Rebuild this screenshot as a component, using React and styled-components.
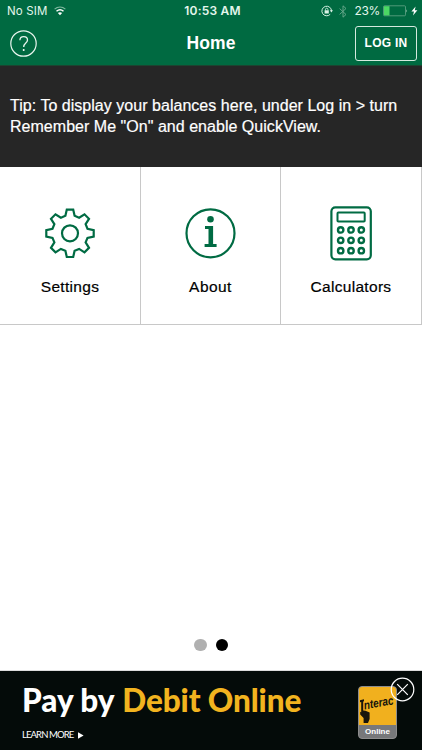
import React from 'react'
import styled, { createGlobalStyle } from 'styled-components'

const GlobalStyle = createGlobalStyle`
    * {
        box-sizing: border-box;
    }

    body {
        margin: 0;
        background: #fff;
        font-family: 'Liberation Sans', Arial, sans-serif;
    }

    svg {
        display: block;
        flex-shrink: 0;
    }
`

const Screen = styled.div`
    display: flex;
    flex-direction: column;
    width: 422px;
    height: 750px;
    overflow: hidden;
    background: #fff;
`

const TopBar = styled.header`
    height: 66px;
    background: #006a41;
    border-bottom: 1px solid #1c4430;
    color: #fff;
`

const StatusBar = styled.div`
    display: grid;
    grid-template-columns: 1fr auto 1fr;
    align-items: center;
    height: 22px;
    padding: 0 4px 0 7px;
    font-family: Inter, 'Liberation Sans', sans-serif;
    font-size: 12px;
    line-height: 22px;
`

const StatusGroup = styled.div`
    display: flex;
    align-items: center;
    justify-content: ${props => props.$end ? 'flex-end' : 'flex-start'};
    white-space: nowrap;
`

const Carrier = styled.span`
    margin-right: 6px;
    font-size: 11.5px;
    letter-spacing: 0.15px;
    color: #e4f6ec;
`

const Clock = styled.span`
    font-size: 12px;
    font-weight: 600;
    letter-spacing: 0.2px;
    color: #e4f6ec;
`

const Percent = styled.span`
    margin: 0 3px 0 7px;
    letter-spacing: -0.3px;
    color: #e4f6ec;
`

const NavBar = styled.div`
    display: grid;
    grid-template-columns: 1fr auto 1fr;
    align-items: center;
    height: 42px;
    padding: 0 5px 0 10px;
`

const HelpButton = styled.button`
    width: 27px;
    height: 27px;
    padding: 0;
    border: 0;
    background: none;
`

const Title = styled.h1`
    margin: 1px 0 0 -5px;
    font-size: 17.5px;
    font-weight: 700;
    letter-spacing: 0.1px;
    line-height: 41px;
`

const LoginButton = styled.button`
    justify-self: end;
    width: 62px;
    height: 35px;
    padding: 0;
    border: 1px solid #d5eadf;
    border-radius: 3px;
    background: none;
    color: #fff;
    font-family: inherit;
    font-size: 12px;
    font-weight: 700;
    letter-spacing: 0.25px;
`

const Tip = styled.p`
    height: 101px;
    margin: 0;
    padding: 30px 0 0 10px;
    background: #262626;
    color: #fff;
    font-size: 16px;
    line-height: 20.5px;
    letter-spacing: 0.03px;
    -webkit-text-stroke: 0.2px #fff;
    white-space: nowrap;
`

const Tiles = styled.div`
    display: grid;
    grid-template-columns: 141px 140px 141px;
    height: 158px;
    border-bottom: 1px solid #c8c8c8;
`

const Tile = styled.div`
    display: flex;
    flex-direction: column;
    align-items: center;
    padding-top: 36px;
    border-right: 1px solid #c8c8c8;
    color: #000;
`

const TileLabel = styled.span`
    margin-top: 14px;
    font-size: 15.5px;
    line-height: 20px;
    letter-spacing: ${props => props.$spacing || 0}px;
    -webkit-text-stroke: 0.2px #000;
`

const Pager = styled.div`
    display: flex;
    flex: 1;
    align-items: flex-end;
    justify-content: center;
    gap: 9px;
    padding-bottom: 19px;
    border-bottom: 1px solid #dcdcdc;
`

const Dot = styled.span`
    width: 12.5px;
    height: 12.5px;
    border-radius: 50%;
    background: ${props => props.$active ? '#000' : '#b0b0b0'};
`

const Banner = styled.footer`
    display: flex;
    justify-content: space-between;
    height: 79px;
    padding-left: 22px;
    background: #040b09;
    color: #fff;
`

const BannerText = styled.div`
    padding-top: 11px;
    font-family: Lato, 'Liberation Sans', sans-serif;
    white-space: nowrap;
`

const Slogan = styled.div`
    font-size: 31.5px;
    font-weight: 900;
    line-height: 36px;
`

const Highlight = styled.span`
    margin-left: 1px;
    letter-spacing: -0.12px;
    color: #f2b41f;
`

const LearnMore = styled.div`
    display: flex;
    align-items: center;
    gap: 5px;
    margin-top: 10px;
    font-size: 9.5px;
    line-height: 14px;
    letter-spacing: -0.9px;
`

const BannerSide = styled.div`
    position: relative;
    width: 64px;
    padding-top: 15px;
`

const InteracBadge = styled.div`
    display: flex;
    flex-direction: column;
    width: 39px;
    height: 53px;
    border: 1px solid #8d8d8d;
    border-radius: 4px;
    background: #77787a;
`

const BadgeArt = styled.div`
    height: 38px;
    border-radius: 3px 3px 0 0;
    background: #f1b01e;
`

const BadgeLabel = styled.span`
    font-size: 8px;
    font-weight: 700;
    line-height: 13px;
    text-align: center;
`

const CloseButton = styled.button`
    position: absolute;
    top: 6px;
    right: 7px;
    width: 25px;
    height: 25px;
    padding: 0;
    border: 0;
    background: none;
`

const GREEN = '#006b43'

// half width and radius of each corner of a tooth, going clockwise
const TOOTH = [[-4.6, 17.5], [-3.2, 23.7], [3.2, 23.7], [4.6, 17.5]]

function gearPoints() {
    const points = []
    for (let i = 0; i < 8; i++) {
        const a = i * Math.PI / 4
        TOOTH.forEach(([x, r]) => {
            const px = x * Math.cos(a) + r * Math.sin(a)
            const py = x * Math.sin(a) - r * Math.cos(a)
            points.push(`${px.toFixed(2)},${py.toFixed(2)}`)
        })
    }
    return points.join(' ')
}

function GearIcon() {
    return (
        <svg width="60" height="60" viewBox="-30 -30.3 60 60" fill="none" stroke={GREEN} strokeWidth="2.2">
            <polygon points={gearPoints()} />
            <circle r="8" />
        </svg>
    )
}

function InfoIcon() {
    return (
        <svg width="60" height="60" viewBox="-29.5 -30.3 60 60" fill={GREEN}>
            <circle r="24" fill="none" stroke={GREEN} strokeWidth="2.2" />
            <circle cy="-14" r="3.3" />
            <path d="M-5.5-7.3H2.6V10.6H6.1V13.6H-5.9V10.6H-2V-4.3H-5.5Z" />
        </svg>
    )
}

function CalculatorIcon() {
    return (
        <svg width="60" height="60" viewBox="-30 -30.3 60 60" fill="none" stroke={GREEN} strokeWidth="2.2">
            <rect x="-19.6" y="-26" width="39.4" height="52" rx="4" />
            <rect x="-13.5" y="-20.7" width="27.2" height="9" rx="0.8" strokeWidth="2" />
            {[-3.4, 7, 17.4].map(y => [-10.3, 0, 10.3].map(x => (
                <circle key={`${x}${y}`} cx={x} cy={y} r="2.7" strokeWidth="2.4" />
            )))}
        </svg>
    )
}

function WifiIcon() {
    return (
        <svg width="12" height="10" viewBox="0 0 12 10" fill="none" stroke="#fff" strokeWidth="1.5">
            <path d="M.6 3.1C3.8.4 8.2.4 11.4 3.1" stroke="#7fb9a0" strokeWidth="1.2" />
            <path d="M2.5 5.2C4.5 3.5 7.5 3.5 9.5 5.2" />
            <path d="M3.9 7C5 6 7 6 8.1 7L6 9.2Z" fill="#fff" stroke="none" />
        </svg>
    )
}

function LockIcon() {
    return (
        <svg width="12" height="12" viewBox="0 0 12 12" fill="none" stroke="#d9f2e5">
            <path d="M9.2 9.3A4.8 4.8 0 1 1 10.5 6" />
            <path d="M8.8 5.3H12L10.4 7.4Z" fill="#d9f2e5" stroke="none" />
            <rect x="3.6" y="5.3" width="4.2" height="3.2" fill="#d9f2e5" stroke="none" />
            <path d="M4.5 5.5V4.4A1.2 1.2 0 0 1 6.9 4.4V5.5" strokeWidth=".8" />
        </svg>
    )
}

const StyledBluetooth = styled.svg`
    margin-left: 6px;
`

function BluetoothIcon() {
    return (
        <StyledBluetooth width="8" height="13" viewBox="0 0 8 13" fill="none" stroke="#6caa8e" strokeWidth="0.9">
            <path d="M.6 3.6L7 9.5 4 12.2V.8L7 3.5.6 9.4" />
        </StyledBluetooth>
    )
}

function BatteryIcon() {
    return (
        <svg width="25" height="12" viewBox="0 0 25 12">
            <rect x=".5" y=".8" width="22" height="10" rx="1" fill="none" stroke="#65a689" strokeWidth=".8" />
            <rect x="1" y="1.2" width="5.5" height="9.2" fill="#4cd864" />
            <path d="M23.3 4.2Q25 5.8 23.3 7.6Z" fill="#9ac7b1" />
        </svg>
    )
}

const StyledBolt = styled.svg`
    margin-left: 3px;
`

function BoltIcon() {
    return (
        <StyledBolt width="7" height="10" viewBox="0 0 7 10" fill="#fff">
            <path d="M4.6.5L.4 5.5H3L2 9.4L6.4 4.2H3.8Z" />
        </StyledBolt>
    )
}

function HelpIcon() {
    return (
        <svg width="27" height="27" viewBox="0 0 27 27" fill="none" stroke="#e8f5ee" strokeWidth="1.2">
            <circle cx="13.5" cy="13.5" r="12.7" />
            <path d="M9.9 10.3C9.9 5.4 17.5 5.6 17.5 10.1C17.5 13.2 13.7 12.8 13.7 16.9" strokeWidth="1.3" />
            <circle cx="13.7" cy="19.9" r="1" fill="#fff" stroke="none" />
        </svg>
    )
}

function CloseIcon() {
    return (
        <svg width="25" height="25" viewBox="0 0 25 25" fill="none" stroke="#fff" strokeWidth="1.2">
            <circle cx="12.5" cy="12.5" r="11.3" />
            <path d="M7.2 7.2L17.8 17.8M17.8 7.2L7.2 17.8" />
        </svg>
    )
}

const StyledArt = styled.svg`
    overflow: visible;
`

function InteracArt() {
    return (
        <StyledArt width="37" height="38" viewBox="0 0 37 38" fill="#17150c">
            <path d="M1 13.2L5 12.2V14.3L4.2 14.5V23.4L6.5 23.8L10.6 25.5V32L9 36H4.6V31L1.2 27.4V24.8L2.2 25.2V15L1 15.3Z" />
            <text x="5.5" y="22.4" transform="rotate(-10 5.5 22.4)" fontFamily="Liberation Sans, sans-serif" fontSize="12" fontWeight="700" fontStyle="italic" textLength="30" lengthAdjust="spacingAndGlyphs">nterac</text>
        </StyledArt>
    )
}

function App() {
    return (
        <Screen>
            <GlobalStyle />
            <TopBar>
                <StatusBar>
                    <StatusGroup>
                        <Carrier>No SIM</Carrier>
                        <WifiIcon />
                    </StatusGroup>
                    <Clock>10:53 AM</Clock>
                    <StatusGroup $end>
                        <LockIcon />
                        <BluetoothIcon />
                        <Percent>23%</Percent>
                        <BatteryIcon />
                        <BoltIcon />
                    </StatusGroup>
                </StatusBar>
                <NavBar>
                    <HelpButton aria-label="Help"><HelpIcon /></HelpButton>
                    <Title>Home</Title>
                    <LoginButton>LOG IN</LoginButton>
                </NavBar>
            </TopBar>
            <Tip>
                Tip: To display your balances here, under Log in &gt; turn<br />
                Remember Me "On" and enable QuickView.
            </Tip>
            <Tiles>
                <Tile>
                    <GearIcon />
                    <TileLabel $spacing={0.3}>Settings</TileLabel>
                </Tile>
                <Tile>
                    <InfoIcon />
                    <TileLabel $spacing={0.45}>About</TileLabel>
                </Tile>
                <Tile>
                    <CalculatorIcon />
                    <TileLabel $spacing={0.3}>Calculators</TileLabel>
                </Tile>
            </Tiles>
            <Pager>
                <Dot />
                <Dot $active />
            </Pager>
            <Banner>
                <BannerText>
                    <Slogan>Pay by <Highlight>Debit Online</Highlight></Slogan>
                    <LearnMore>
                        LEARN MORE
                        <svg width="6" height="7" viewBox="0 0 6 7" fill="#fff"><path d="M0 .3L5.6 3.5 0 6.7Z" /></svg>
                    </LearnMore>
                </BannerText>
                <BannerSide>
                    <InteracBadge>
                        <BadgeArt><InteracArt /></BadgeArt>
                        <BadgeLabel>Online</BadgeLabel>
                    </InteracBadge>
                    <CloseButton aria-label="Close"><CloseIcon /></CloseButton>
                </BannerSide>
            </Banner>
        </Screen>
    )
}

export default App
